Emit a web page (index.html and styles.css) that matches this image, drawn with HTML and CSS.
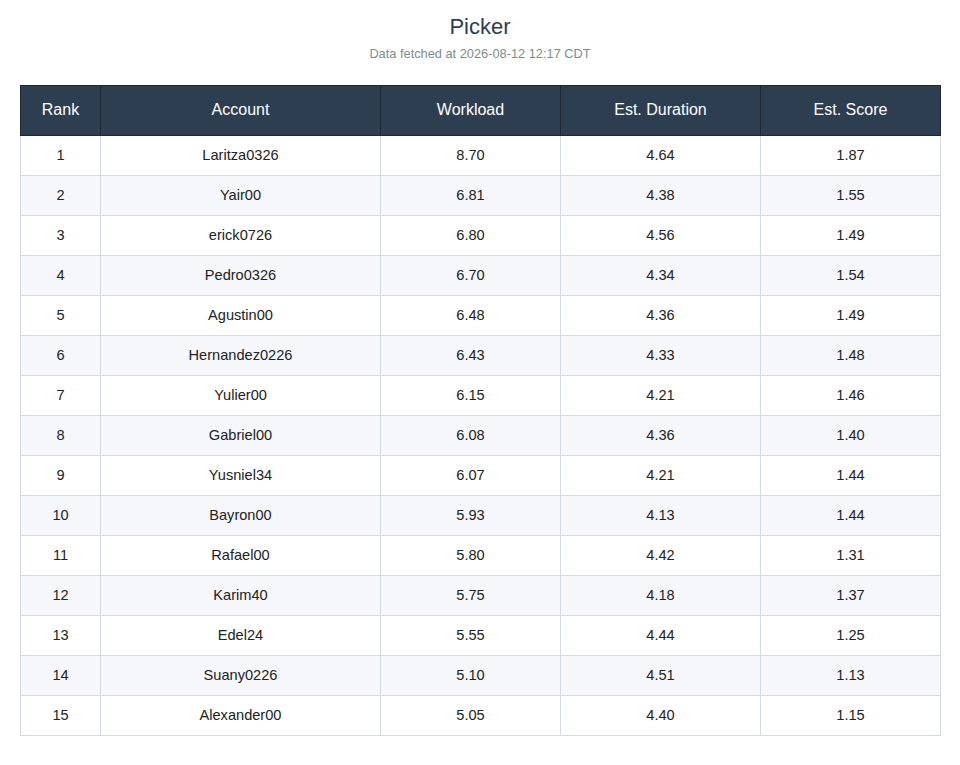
FILE: index.html
```html
<!DOCTYPE html>
<html>
<head>
<meta charset="utf-8">
<title>Picker</title>
<link rel="stylesheet" href="styles.css">
</head>
<body>
<header class="page-head">
  <h1 class="title">Picker</h1>
  <p class="subtitle">Data fetched at 2026-08-12 12:17 CDT</p>
</header>
<table class="board">
  <colgroup>
    <col class="c-rank"><col class="c-acct"><col class="c-work"><col class="c-dur"><col class="c-score">
  </colgroup>
  <thead>
    <tr><th>Rank</th><th>Account</th><th>Workload</th><th>Est. Duration</th><th>Est. Score</th></tr>
  </thead>
  <tbody>
    <tr><td>1</td><td>Laritza0326</td><td>8.70</td><td>4.64</td><td>1.87</td></tr>
    <tr><td>2</td><td>Yair00</td><td>6.81</td><td>4.38</td><td>1.55</td></tr>
    <tr><td>3</td><td>erick0726</td><td>6.80</td><td>4.56</td><td>1.49</td></tr>
    <tr><td>4</td><td>Pedro0326</td><td>6.70</td><td>4.34</td><td>1.54</td></tr>
    <tr><td>5</td><td>Agustin00</td><td>6.48</td><td>4.36</td><td>1.49</td></tr>
    <tr><td>6</td><td>Hernandez0226</td><td>6.43</td><td>4.33</td><td>1.48</td></tr>
    <tr><td>7</td><td>Yulier00</td><td>6.15</td><td>4.21</td><td>1.46</td></tr>
    <tr><td>8</td><td>Gabriel00</td><td>6.08</td><td>4.36</td><td>1.40</td></tr>
    <tr><td>9</td><td>Yusniel34</td><td>6.07</td><td>4.21</td><td>1.44</td></tr>
    <tr><td>10</td><td>Bayron00</td><td>5.93</td><td>4.13</td><td>1.44</td></tr>
    <tr><td>11</td><td>Rafael00</td><td>5.80</td><td>4.42</td><td>1.31</td></tr>
    <tr><td>12</td><td>Karim40</td><td>5.75</td><td>4.18</td><td>1.37</td></tr>
    <tr><td>13</td><td>Edel24</td><td>5.55</td><td>4.44</td><td>1.25</td></tr>
    <tr><td>14</td><td>Suany0226</td><td>5.10</td><td>4.51</td><td>1.13</td></tr>
    <tr><td>15</td><td>Alexander00</td><td>5.05</td><td>4.40</td><td>1.15</td></tr>
  </tbody>
</table>
</body>
</html>
```
FILE: styles.css
```css
html, body {
  margin: 0;
  padding: 0;
  background: #ffffff;
}
body {
  font-family: "Liberation Sans", Arial, sans-serif;
  color: #222222;
  padding: 14px 20px 20px;
}
.page-head {
  text-align: center;
  margin-bottom: 23px;
}
.title {
  margin: 0;
  font-size: 22px;
  line-height: 26px;
  font-weight: normal;
  color: #2c3e50;
}
.subtitle {
  margin: 6px 0 0;
  font-size: 12.8px;
  line-height: 16px;
  color: #7f8c8d;
}
.board {
  width: 920px;
  border-collapse: collapse;
  table-layout: fixed;
}
.c-rank { width: 80px; }
.c-acct { width: 280px; }
.c-work { width: 180px; }
.c-dur { width: 200px; }
.c-score { width: 180px; }
.board th {
  background: #2c3e50;
  color: #ffffff;
  font-weight: normal;
  font-size: 16px;
  height: 50px;
  padding: 0 0 2px;
  text-align: center;
  border: 1px solid #1c2833;
  box-sizing: border-box;
}
.board td {
  height: 40px;
  padding: 0 0 2px;
  text-align: center;
  font-size: 14.6px;
  color: #222222;
  border: 1px solid #d5dbe3;
  box-sizing: border-box;
}
.board tbody tr:nth-child(even) td {
  background: #f5f7fa;
}
```
